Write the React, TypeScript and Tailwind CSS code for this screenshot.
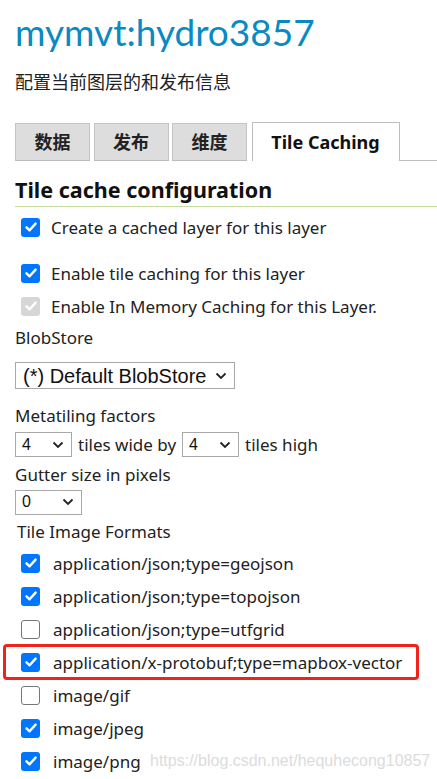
import React from "react";

const FONT = { fontFamily: '"Noto Sans", "Noto Sans CJK SC", sans-serif' };

function Check({ checked, disabled }: { checked: boolean; disabled?: boolean }) {
  if (!checked) {
    return (
      <span className="inline-block w-[19px] h-[19px] rounded-[3px] border border-[#767676] bg-white shrink-0" />
    );
  }
  return (
    <span
      className={`inline-flex items-center justify-center w-[19px] h-[19px] rounded-[3px] shrink-0 ${
        disabled ? "bg-[#d6d6d6]" : "bg-[#0075ff]"
      }`}
    >
      <svg width="14" height="14" viewBox="0 0 14 14">
        <path
          d="M2.5 7.3 L5.6 10.3 L11.6 3.6"
          fill="none"
          stroke="white"
          strokeWidth="2.4"
          strokeLinecap="round"
          strokeLinejoin="round"
        />
      </svg>
    </span>
  );
}

function CheckRow({
  label,
  checked,
  disabled,
  className = "",
  gap = "gap-[11px]",
}: {
  label: string;
  checked: boolean;
  disabled?: boolean;
  className?: string;
  gap?: string;
}) {
  return (
    <div className={`flex items-center ${gap} pl-[21px] h-[24px] ${className}`}>
      <Check checked={checked} disabled={disabled} />
      <span className="text-[17px] text-[#222] leading-none">{label}</span>
    </div>
  );
}

function Select({ value, width, big }: { value: string; width: string; big?: boolean }) {
  return (
    <div
      className={`inline-flex items-center justify-between border border-[#a9a9a9] bg-white ${width} ${
        big ? "h-[27px] pl-[7px] pr-[7px]" : "h-[25px] pl-[6px] pr-[7px]"
      }`}
    >
      <span
        className={`${big ? "text-[20px]" : "text-[16px]"} text-[#111] leading-none`}
        style={{ fontFamily: '"Liberation Sans", Arial, sans-serif' }}
      >
        {value}
      </span>
      <svg width="12" height="8" viewBox="0 0 12 8">
        <path d="M1.5 1.5 L6 6 L10.5 1.5" fill="none" stroke="#222" strokeWidth="1.8" />
      </svg>
    </div>
  );
}

const tabs = ["数据", "发布", "维度"];

const formats: { label: string; checked: boolean; highlight?: boolean }[] = [
  { label: "application/json;type=geojson", checked: true },
  { label: "application/json;type=topojson", checked: true },
  { label: "application/json;type=utfgrid", checked: false },
  { label: "application/x-protobuf;type=mapbox-vector", checked: true, highlight: true },
  { label: "image/gif", checked: false },
  { label: "image/jpeg", checked: true },
  { label: "image/png", checked: true },
];

export default function App() {
  return (
    <div className="w-[437px] h-[779px] overflow-hidden bg-white relative" style={FONT}>
      <h1
        className="pl-[15px] pt-[8px] text-[37px] leading-[48px] text-[#0a8ac3]"
        style={{ fontFamily: "Lato, sans-serif" }}
      >
        mymvt:hydro3857
      </h1>
      <p className="pl-[15px] mt-[14px] text-[18px] leading-[24px] text-[#222]">配置当前图层的和发布信息</p>

      {/* tabs */}
      <div className="flex items-end pl-[15px] mt-[28px] h-[39px]">
        {tabs.map((t) => (
          <div
            key={t}
            className="w-[75px] h-[38px] mr-[3.5px] bg-[#dddddd] border border-[#c4c4c4] border-b-[#bbb] flex items-center justify-center text-[18px] font-bold text-[#222]"
          >
            {t}
          </div>
        ))}
        <div className="w-[148px] h-[39px] ml-[1px] bg-white border border-[#bdbdbd] border-b-0 flex items-center justify-center text-[18px] font-bold text-[#111]">
          Tile Caching
        </div>
        <div className="flex-1 border-b border-[#bdbdbd]" />
      </div>

      <h2 className="ml-[15px] mt-[16px] text-[21.5px] leading-[26px] font-bold text-[#111] pb-[3px] border-b border-[#c6dd9e]">
        Tile cache configuration
      </h2>

      <CheckRow className="mt-[8px]" label="Create a cached layer for this layer" checked />
      <CheckRow className="mt-[22px]" label="Enable tile caching for this layer" checked />
      <CheckRow className="mt-[9px]" label="Enable In Memory Caching for this Layer." checked disabled />

      <div className="pl-[15px] mt-[8px] text-[17px] leading-[24px] text-[#222]">BlobStore</div>
      <div className="pl-[15px] mt-[12px] h-[27px]">
        <Select value="(*) Default BlobStore" width="w-[220px]" big />
      </div>

      <div className="pl-[15px] mt-[15px] text-[17px] leading-[24px] text-[#222]">Metatiling factors</div>
      <div className="pl-[15px] mt-[4px] h-[25px] flex items-center gap-[6px] text-[17px] text-[#222]">
        <Select value="4" width="w-[57px]" />
        <span>tiles wide by</span>
        <Select value="4" width="w-[57px]" />
        <span>tiles high</span>
      </div>

      <div className="pl-[15px] mt-[6px] text-[17px] leading-[24px] text-[#222]">Gutter size in pixels</div>
      <div className="pl-[15px] mt-[2px] h-[25px]">
        <Select value="0" width="w-[67px]" />
      </div>

      <div className="pl-[17px] mt-[6px] text-[17px] leading-[24px] text-[#222]">Tile Image Formats</div>

      <div className="mt-[7px] flex flex-col gap-[9px]">
        {formats.map((f) =>
          f.highlight ? (
            <div
              key={f.label}
              className="ml-[3px] w-[416px] -my-[6px] py-[3px] border-[3px] border-[#f0221c] rounded-[4px]"
            >
              <CheckRow className="!pl-[15px]" gap="gap-[13px]" label={f.label} checked={f.checked} />
            </div>
          ) : (
            <CheckRow key={f.label} gap="gap-[13px]" label={f.label} checked={f.checked} />
          )
        )}
      </div>

      <div
        className="absolute left-[150px] top-[750px] text-[16px] text-[#dcdcdc] leading-[22px]"
        style={{ fontFamily: '"Liberation Sans", Arial, sans-serif' }}
      >
        https://blog.csdn.net/hequhecong10857
      </div>
    </div>
  );
}
